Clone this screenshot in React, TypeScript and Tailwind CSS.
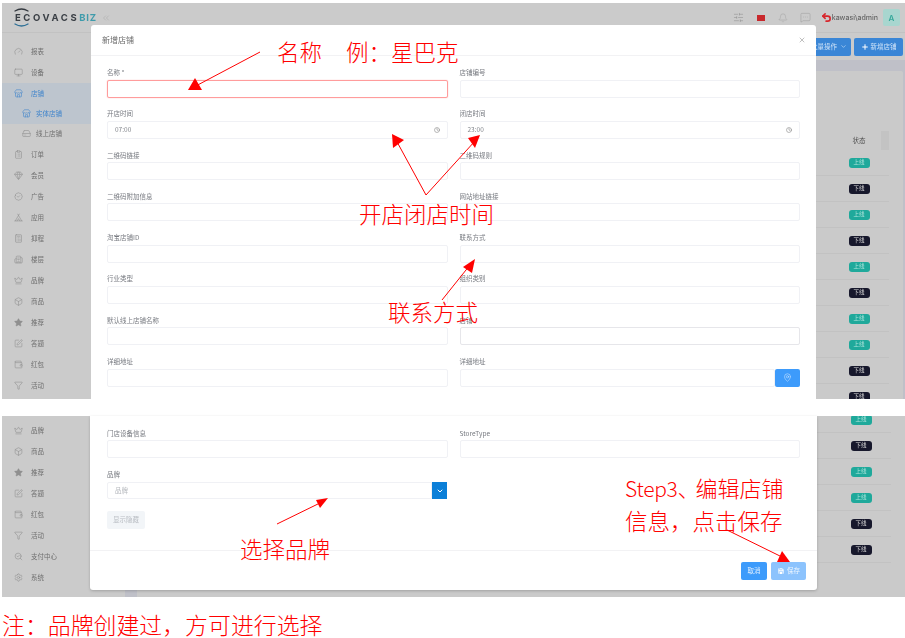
import React from 'react';
import {
  Gauge, Monitor, Store, HardDrive, ClipboardList, Gem, BadgeCheck, Tent, Calculator, Building2,
  Crown, Box, Star, SquarePen, Filter, SearchCheck, Settings, ChevronsLeft, ChevronDown, Plus,
  SlidersHorizontal, Bell, MessageSquareMore, Undo2, X, Clock, MapPin, Save, Wallet,
} from 'lucide-react';

const topMenu = [
  { label: '报表', icon: Gauge },
  { label: '设备', icon: Monitor },
  { label: '店铺', icon: Store, active: true },
  { label: '实体店铺', icon: Store, sub: true, active: true },
  { label: '线上店铺', icon: HardDrive, sub: true },
  { label: '订单', icon: ClipboardList },
  { label: '会员', icon: Gem },
  { label: '广告', icon: BadgeCheck },
  { label: '应用', icon: Tent },
  { label: '抑程', icon: Calculator },
  { label: '楼层', icon: Building2 },
  { label: '品牌', icon: Crown },
  { label: '商品', icon: Box },
  { label: '推荐', icon: Star, solid: true },
  { label: '答题', icon: SquarePen },
  { label: '红包', icon: Wallet },
  { label: '活动', icon: Filter },
];

const bottomMenu = [
  { label: '品牌', icon: Crown },
  { label: '商品', icon: Box },
  { label: '推荐', icon: Star, solid: true },
  { label: '答题', icon: SquarePen },
  { label: '红包', icon: Wallet },
  { label: '活动', icon: Filter },
  { label: '支付中心', icon: SearchCheck },
  { label: '系统', icon: Settings },
];

const topFields = [
  { label: '名称 *', error: true },
  { label: '店铺编号' },
  { label: '开店时间', value: '07:00', time: true },
  { label: '闭店时间', value: '23:00', time: true },
  { label: '二维码链接' },
  { label: '二维码规则' },
  { label: '二维码附加信息' },
  { label: '网站地址链接' },
  { label: '淘宝店铺ID' },
  { label: '联系方式' },
  { label: '行业类型' },
  { label: '组织类别' },
  { label: '默认线上店铺名称' },
  { label: '店铺', dark: true },
  { label: '详细地址' },
  { label: '详细地址', map: true },
];

function Sidebar({ items, className }: { items: any[]; className: string }) {
  return (
    <div className={className}>
      {items.map((item) => {
        const Icon = item.icon;
        return (
          <div
            key={item.label}
            className={`flex items-center ${item.sub ? 'h-[20px] pl-[20px] gap-[5px]' : 'h-[21px] pl-[12px] gap-[8px]'} ${item.active ? 'bg-[#bdc5ce] text-[#3f84cb]' : 'text-[#6f6f6f]'}`}
          >
            <Icon
              className={`w-[9px] h-[9px] ${item.active ? 'text-[#3f84cb]' : 'text-[#8f8f8f]'}`}
              strokeWidth={1.5}
              fill={item.solid ? 'currentColor' : 'none'}
            />
            <span className="text-[6.5px] leading-none">{item.label}</span>
          </div>
        );
      })}
    </div>
  );
}

function Badge({ on }: { on: boolean }) {
  return (
    <span className={`w-[21px] h-[10px] rounded-[3px] flex items-center justify-center text-[5.5px] leading-none ${on ? 'bg-[#1fa99b] text-[#a9e2da]' : 'bg-[#17182c] text-[#d8d8d8]'}`}>
      {on ? '上线' : '下线'}
    </span>
  );
}

function StatusRows({ rows }: { rows: boolean[] }) {
  return (
    <>
      {rows.map((on, i) => (
        <div key={i} className="h-[26px] flex items-center justify-end border-b border-[#c2c2c2] mr-[14px]">
          <div className="w-[60px] flex justify-center">
            <Badge on={on} />
          </div>
        </div>
      ))}
    </>
  );
}

function Field({ field }: { field: any }) {
  return (
    <div className="min-w-0">
      <div className="h-[14.5px] flex items-center text-[6.5px] leading-none text-[#777a80]">{field.label}</div>
      <div className="flex h-[18px]">
        <div className={`flex-1 min-w-0 flex items-center justify-between px-[7px] rounded-[2px] border text-[6.5px] text-[#85888e] ${field.error ? 'border-[#ff9c9c] shadow-[0_0_1px_#ff8a8a]' : field.dark ? 'border-[#e6e6ea]' : 'border-[#f0f1f5]'}`}>
          <span>{field.value}</span>
          {field.time && <Clock className="w-[6px] h-[6px] text-[#777]" strokeWidth={2} />}
        </div>
        {field.map && (
          <div className="w-[25px] bg-[#3d9bfb] rounded-[2px] flex items-center justify-center">
            <MapPin className="w-[9px] h-[9px] text-[#cfe6ff]" strokeWidth={1.5} />
          </div>
        )}
      </div>
    </div>
  );
}

function Logo() {
  return (
    <div className="relative flex items-baseline pl-[13px] font-['Inter',sans-serif] font-bold text-[9.5px] leading-none tracking-[2.6px]">
      <svg className="absolute left-[10px] top-[-6px] w-[19px] h-[21px]" viewBox="0 0 19 21" fill="none" strokeWidth="1.3" strokeLinecap="round">
        <path d="M3 4 Q9.5 0 16 4" stroke="#34393f" />
        <path d="M3 17 Q9.5 21 16 17" stroke="#2d6f96" />
      </svg>
      <span className="text-[#3a3f45]">ECOVACS</span>
      <span className="text-[#3f9bab] tracking-[0.8px]">BIZ</span>
    </div>
  );
}

function Header() {
  return (
    <div className="h-[30px] shrink-0 flex items-center border-b border-[#c2c2c2]">
      <Logo />
      <ChevronsLeft className="ml-[4px] w-[10px] h-[10px] text-[#a5a5a5]" strokeWidth={1.2} />
      <div className="ml-auto flex items-center pr-[5px]">
        <SlidersHorizontal className="w-[11px] h-[11px] text-[#8f8f8f]" strokeWidth={1.2} />
        <span className="ml-[13px] w-[8px] h-[6px] bg-[#c8282c]" />
        <Bell className="ml-[13px] w-[10px] h-[10px] text-[#a0a0a0]" strokeWidth={1.2} />
        <MessageSquareMore className="ml-[12px] w-[11px] h-[11px] text-[#a0a0a0]" strokeWidth={1.2} />
        <Undo2 className="ml-[10px] w-[11px] h-[11px] text-[#d8262c]" strokeWidth={3.5} />
        <span className="text-[7px] leading-none font-['Inter',sans-serif] font-medium text-[#666]">kawasi\admin</span>
        <span className="ml-[5px] w-[17px] h-[17px] rounded-[2px] bg-[#a8d6cf] text-[#35a89a] flex items-center justify-center text-[8px] font-semibold font-['Inter',sans-serif]">A</span>
      </div>
    </div>
  );
}

export default function App() {
  return (
    <div className="relative w-[905px] h-[638px] bg-white overflow-hidden pl-[2px] pt-[3px] font-['Noto_Sans_CJK_SC',sans-serif]">
      {/* top screenshot */}
      <div className="relative h-[396px] bg-[#cbcbcb] overflow-hidden blur-[0.35px]">
        <Header />
        <div className="flex h-[366px]">
          <Sidebar items={topMenu} className="w-[89px] shrink-0 pt-[7.5px]" />
          <div className="flex-1 flex flex-col">
            <div className="h-[27px] shrink-0 flex items-center justify-end gap-[3px] pr-[2px]">
              <div className="h-[18px] w-[60px] rounded-[2px] bg-[#3a86d6] flex items-center justify-end gap-[3px] pr-[4px] text-[6.5px] text-[#cfe3f8]">
                批量操作
                <ChevronDown className="w-[7px] h-[7px]" strokeWidth={2} />
              </div>
              <div className="h-[18px] w-[49px] rounded-[2px] bg-[#3a86d6] flex items-center justify-center gap-[2px] text-[6.5px] text-[#cfe3f8]">
                <Plus className="w-[8px] h-[8px] text-white" strokeWidth={3} />
                新增店铺
              </div>
            </div>
            <div className="flex-1 bg-[#bfc0c8] pt-[11px] pr-[2px]">
              <div className="h-full rounded-[2px] bg-[#cacaca] pt-[60px]">
                <div className="h-[19px] flex items-center justify-end mr-[14px]">
                  <span className="w-[44px] text-center text-[6.5px] text-[#505050]">状态</span>
                  <div className="w-[8px] h-full bg-[#c3c3c3]" />
                </div>
                <StatusRows rows={[true, false, true, false, true, false, true, true, false, false]} />
              </div>
            </div>
          </div>
        </div>
      </div>

      {/* top modal part */}
      <div className="absolute left-[91px] top-[25px] w-[725px] h-[391px] bg-white rounded-t-[3px] blur-[0.35px]">
        <div className="h-[31px] flex items-center justify-between pl-[11px] pr-[10px] border-b border-[#f2f2f4]">
          <span className="text-[8px] leading-none text-[#6a6a6a]">新增店铺</span>
          <X className="w-[8px] h-[8px] text-[#808080]" strokeWidth={1.5} />
        </div>
        <div className="grid grid-cols-2 gap-x-[12px] gap-y-[8.8px] pl-[16px] pr-[16px] pt-[9px]">
          {topFields.map((field, i) => (
            <Field key={i} field={field} />
          ))}
        </div>
      </div>

      {/* bottom screenshot */}
      <div className="absolute left-[2px] top-[416px] w-[903px] h-[181px] bg-[#cbcbcb] overflow-hidden flex blur-[0.35px]">
        <Sidebar items={bottomMenu} className="w-[88px] shrink-0 pt-[3.5px]" />
        <div className="flex-1 bg-[#cacaca] -mt-[9px]">
          <StatusRows rows={[true, false, true, true, false, false]} />
        </div>
        <div className="absolute left-[123px] top-[174px] w-[12px] h-[7px] bg-[#bfc0c8]" />
      </div>

      {/* bottom modal part */}
      <div className="absolute left-[90px] top-[416px] w-[727px] h-[174px] bg-white rounded-b-[3px] shadow-[0_1px_3px_rgba(0,0,0,0.2)] flex flex-col blur-[0.35px]">
        <div className="flex-1 pl-[17px] pr-[17px] pt-[9.5px]">
          <div className="grid grid-cols-2 gap-x-[12px]">
            <Field field={{ label: '门店设备信息' }} />
            <Field field={{ label: 'StoreType' }} />
          </div>
          <div className="mt-[8px] w-[340px]">
            <div className="h-[16px] flex items-center text-[6.5px] leading-none text-[#777a80]">品牌</div>
            <div className="flex h-[17px]">
              <div className="flex-1 flex items-center pl-[7px] rounded-l-[2px] border border-[#f0f1f5] text-[6.5px] text-[#b5b8bd]">品牌</div>
              <div className="w-[15px] bg-[#0b7fd8] flex items-center justify-center">
                <ChevronDown className="w-[8px] h-[8px] text-white" strokeWidth={3} />
              </div>
            </div>
          </div>
          <div className="mt-[12px] w-[38px] h-[18px] rounded-[2px] bg-[#f2f5f8] flex items-center justify-center text-[6.5px] text-[#b9bdc3]">显示隐藏</div>
        </div>
        <div className="h-[40px] shrink-0 border-t border-[#f2f2f4] flex items-start justify-end gap-[4px] pt-[11px] pr-[11px]">
          <div className="w-[26px] h-[18px] rounded-[2px] bg-[#3d9bfb] flex items-center justify-center text-[6.5px] text-[#e3f0ff]">取消</div>
          <div className="w-[35px] h-[18px] rounded-[2px] bg-[#8cc3fd] flex items-center justify-center gap-[2px] text-[6.5px] text-[#eef6ff]">
            <Save className="w-[8px] h-[8px] text-white" strokeWidth={2} fill="currentColor" stroke="#8cc3fd" />
            保存
          </div>
        </div>
      </div>

      {/* red annotations */}
      <svg className="absolute inset-0 w-[905px] h-[638px]" viewBox="0 0 905 638" fill="none" stroke="#ff0000" strokeWidth="1">
        <path d="M260 52 L192 88" />
        <polygon points="188,90 195,78 202,90" fill="#ff0000" stroke="none" />
        <path d="M426 195 L396 140" />
        <polygon points="392,134 404,140 393,148" fill="#ff0000" stroke="none" />
        <path d="M426 195 L475 141" />
        <polygon points="480,135 468,138 475,148" fill="#ff0000" stroke="none" />
        <path d="M442 300 L470 265" />
        <polygon points="475,259 463,267 472,273" fill="#ff0000" stroke="none" />
        <path d="M277 524 L322 502" />
        <polygon points="328,498 316,500 320,508" fill="#ff0000" stroke="none" />
        <path d="M727 530 L782 557" />
        <polygon points="782,551 777,562 790,562" fill="#ff0000" stroke="none" />
      </svg>
      <div className="font-light">
        <span className="absolute left-[277px] top-[36.5px] text-[22.5px] leading-[28px] text-[#ff0000] whitespace-pre">名称</span>
        <span className="absolute left-[346px] top-[36.5px] text-[22.5px] leading-[28px] text-[#ff0000] whitespace-pre">例：星巴克</span>
        <span className="absolute left-[359px] top-[199px] text-[22.5px] leading-[28px] text-[#ff0000]">开店闭店时间</span>
        <span className="absolute left-[388px] top-[297px] text-[22.5px] leading-[28px] text-[#ff0000]">联系方式</span>
        <span className="absolute left-[240px] top-[534px] text-[22.5px] leading-[28px] text-[#ff0000]">选择品牌</span>
        <span className="absolute left-[625px] top-[473px] text-[22px] leading-[28px] text-[#ff0000] whitespace-pre">
          <span className="text-[21px] tracking-[-0.3px]">Step3</span>
          <span className="tracking-[-9px]">、</span>
          <span className="ml-[5px]">编辑店铺</span>
        </span>
        <span className="absolute left-[625px] top-[506px] text-[22.5px] leading-[28px] text-[#ff0000]">信息，点击保存</span>
        <span className="absolute left-[2px] top-[611px] text-[22.9px] leading-[26px] text-[#ff0000]">注：品牌创建过，方可进行选择</span>
      </div>
    </div>
  );
}
